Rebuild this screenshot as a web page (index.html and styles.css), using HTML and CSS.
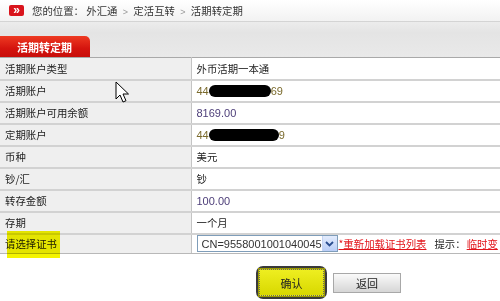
FILE: index.html
```html
<!DOCTYPE html>
<html lang="zh-CN">
<head>
    <meta charset="UTF-8">
    <title>活期转定期</title>
    <link rel="stylesheet" href="styles.css">
</head>
<body>
    <div class="crumb">
        <span class="crumb-icon">&#187;</span>
        <span>您的位置：&nbsp;外汇通 <span class="sep">&gt;</span> 定活互转 <span class="sep">&gt;</span> 活期转定期</span>
    </div>

    <div class="tabbar">
        <div class="tab">活期转定期</div>
    </div>

    <table class="form-table">
        <tr><td class="label">活期账户类型</td><td class="value">外币活期一本通</td></tr>
        <tr><td class="label">活期账户</td><td class="value"><span class="acct">44</span><span class="mask"></span><span class="acct">69</span></td></tr>
        <tr><td class="label">活期账户可用余额</td><td class="value num">8169.00</td></tr>
        <tr><td class="label">定期账户</td><td class="value"><span class="acct">44</span><span class="mask wide"></span><span class="acct">9</span></td></tr>
        <tr><td class="label">币种</td><td class="value">美元</td></tr>
        <tr><td class="label">钞/汇</td><td class="value">钞</td></tr>
        <tr><td class="label">转存金额</td><td class="value num">100.00</td></tr>
        <tr><td class="label">存期</td><td class="value">一个月</td></tr>
        <tr class="last">
            <td class="label">请选择证书</td>
            <td class="value">
                <div class="cert-line">
                    <div class="select">
                        <span class="select-text">CN=9558001001040045</span>
                        <span class="select-btn">
                            <svg width="9" height="6" viewBox="0 0 9 6"><path d="M1 1l3.5 3.5L8 1" fill="none" stroke="#2a4d8f" stroke-width="1.8"/></svg>
                        </span>
                    </div>
                    <a class="reload">*重新加载证书列表</a>
                    <span class="hint">提示：</span>
                    <a class="reload">临时变</a>
                </div>
            </td>
        </tr>
    </table>

    <div class="actions">
        <div class="ok-wrap"><button class="btn-ok">确认</button></div>
        <button class="btn-back">返回</button>
    </div>

    <!-- highlight marker and mouse pointer drawn over the page -->
    <div class="marker"></div>
    <svg class="cursor" width="14" height="22" viewBox="0 0 14 22">
        <path d="M1 1v17l4-4 3 7 3-1.3-3-6.7h5.5z" fill="#fff" stroke="#000" stroke-width="1"/>
    </svg>
</body>
</html>
```

FILE: styles.css
```css
* {
    box-sizing: border-box;
    margin: 0;
    padding: 0;
}

body {
    width: 500px;
    height: 301px;
    overflow: hidden;
    position: relative;
    background: #fff;
    font-family: "Noto Sans CJK SC", "Liberation Sans", sans-serif;
    font-size: 10.4px;
    color: #222;
}

.crumb {
    height: 22px;
    display: flex;
    align-items: center;
    padding-left: 9px;
    gap: 8px;
    background: linear-gradient(#ffffff, #f2f2f2);
    border-bottom: 1px solid #d4d4d4;
    color: #333;
    white-space: nowrap;
}

.crumb-icon {
    width: 15px;
    height: 11px;
    border-radius: 2px;
    background: #d9141c;
    color: #fff;
    font-family: "Liberation Sans", sans-serif;
    font-size: 12px;
    font-weight: bold;
    line-height: 10px;
    text-align: center;
}

.crumb .sep {
    color: #999;
    font-family: "Liberation Sans", sans-serif;
    font-size: 9px;
    padding: 0 3px;
}

.tabbar {
    height: 35px;
    background: linear-gradient(#ececec, #e4e4e4 30%, #e9e9e9);
    display: flex;
    align-items: flex-end;
}

.tab {
    width: 90px;
    height: 21px;
    padding-left: 17px;
    line-height: 22px;
    background: linear-gradient(#ee3a22, #d4140e 60%, #c80e0a);
    border-radius: 0 5px 0 0;
    color: #fff;
    font-weight: bold;
    font-size: 11px;
}

.form-table {
    width: 100%;
    border-collapse: collapse;
    border-top: 1px solid #a9a9a9;
}

.form-table td {
    height: 22px;
    border-bottom: 2px solid #d2d2d2;
    vertical-align: middle;
    white-space: nowrap;
}

.form-table .label {
    width: 191px;
    padding-left: 5px;
    background: #efefef;
    border-right: 1px solid #c4c4c4;
    color: #222;
}

.form-table .value {
    padding-left: 5px;
    background: #fff;
}

.form-table .last td {
    height: 20px;
    border-bottom: 1px solid #b8b8b8;
}

.num,
.acct {
    font-family: "Liberation Sans", sans-serif;
    font-size: 11px;
}

.num {
    color: #4c3d78;
}

.acct {
    color: #7a6a2c;
}

.mask {
    display: inline-block;
    width: 62px;
    height: 12px;
    border-radius: 6px;
    background: #000;
    vertical-align: -2px;
}

.mask.wide {
    width: 70px;
}

.cert-line {
    display: flex;
    align-items: center;
}

.select {
    width: 141px;
    height: 17px;
    flex-shrink: 0;
    display: flex;
    align-items: center;
    justify-content: space-between;
    border: 1px solid #7f9db9;
    padding-left: 4px;
    background: #fff;
}

.select-text {
    font-family: "Liberation Sans", sans-serif;
    font-size: 11px;
    color: #333;
}

.select-btn {
    width: 15px;
    height: 15px;
    display: flex;
    align-items: center;
    justify-content: center;
    background: linear-gradient(#e3ecfd, #b9cdf6);
    border-left: 1px solid #c4d4f4;
}

.reload {
    color: #e2141a;
    text-decoration: underline;
    margin-left: 1px;
    flex-shrink: 0;
}

.hint {
    margin-left: 8px;
    color: #222;
    flex-shrink: 0;
}

.actions {
    display: flex;
    align-items: center;
    gap: 6px;
    padding: 12px 0 0 256px;
}

.ok-wrap {
    width: 71px;
    height: 33px;
    border: 2px solid #3a3a3a;
    border-radius: 7px;
    padding: 1px;
    display: flex;
    background: #fffff0;
}

.btn-ok {
    flex: 1;
    border: 1px dotted #666;
    outline: 1px solid #9a9a00;
    background: linear-gradient(#eeee20, #d8d800);
    font-family: "Noto Sans CJK SC", sans-serif;
    font-size: 11px;
    color: #222;
}

.btn-back {
    width: 68px;
    height: 20px;
    border: 1px solid #a8a8a8;
    background: linear-gradient(#fafafa, #d6d6d6);
    font-family: "Noto Sans CJK SC", sans-serif;
    font-size: 11px;
    color: #222;
}

.marker {
    position: absolute;
    left: 7px;
    top: 231px;
    width: 53px;
    height: 27px;
    background: #f4f400;
    mix-blend-mode: multiply;
}

.cursor {
    position: absolute;
    left: 115px;
    top: 81px;
}
```
